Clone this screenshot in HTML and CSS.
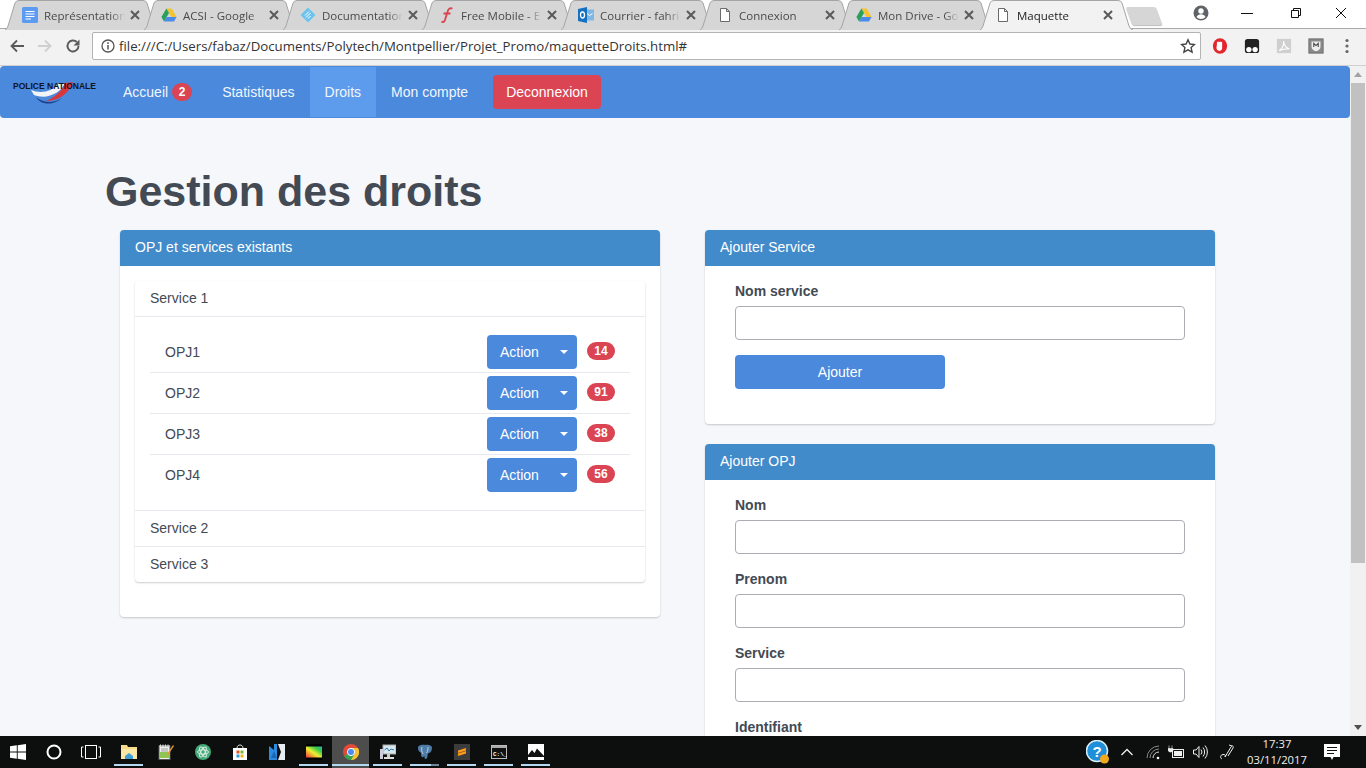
FILE: index.html
```html
<!DOCTYPE html>
<html lang="fr">
<head>
<meta charset="utf-8">
<title>Maquette</title>
<link rel="stylesheet" href="styles.css">
</head>
<body>
<svg class="sprite" aria-hidden="true">
  <symbol id="i-drive" viewBox="0 0 16 16">
    <path d="M5.400 1.500h5.200l5 8.600h-5.200z" fill="#f4c430"/>
    <path d="M5.400 1.500l2.600 4.400-5 8.600-2.600-4.400z" fill="#2aa05a"/>
    <path d="M3 14.500l2.600-4.400h10l-2.600 4.400z" fill="#4b8bea"/>
  </symbol>
  <symbol id="i-page" viewBox="0 0 16 16">
    <path d="M3.500 1.500h6l3 3v10h-9z M9.500 1.500v3h3" fill="#fff" stroke="#6b6b6b" stroke-width="1"/>
  </symbol>
  <symbol id="i-close" viewBox="0 0 12 12">
    <path d="M2 2l8 8M10 2l-8 8" stroke="#5a5a5a" stroke-width="2" fill="none"/>
  </symbol>
  <symbol id="i-tab" viewBox="0 0 153 30" preserveAspectRatio="none">
    <path d="M0 30 Q2 29 3 26 L10 3 Q11 .5 14 .5 H138 Q141 .5 142 3 L149 26 Q150 29 153 30"/>
  </symbol>
</svg>

<header class="tabstrip">
  <div class="tabs">
    <div class="tab">
      <svg class="tab-shape"><use href="#i-tab"/></svg>
      <svg class="tab-icon" viewBox="0 0 16 16"><rect x="0" y="0" width="16" height="16" rx="1.500" fill="#5c9bf2"/><path d="M3.500 4.500h9M3.500 7h9M3.500 9.500h9M3.500 12h5.500" stroke="#fff" stroke-width="1.100"/></svg>
      <span class="tab-text">Représentation</span>
      <svg class="tab-close"><use href="#i-close"/></svg>
    </div>
    <div class="tab">
      <svg class="tab-shape"><use href="#i-tab"/></svg>
      <svg class="tab-icon"><use href="#i-drive"/></svg>
      <span class="tab-text">ACSI - Google</span>
      <svg class="tab-close"><use href="#i-close"/></svg>
    </div>
    <div class="tab">
      <svg class="tab-shape"><use href="#i-tab"/></svg>
      <svg class="tab-icon" viewBox="0 0 16 16"><path d="M8 .5L15.500 8 8 15.500.5 8z" fill="#6cc4ee"/><path d="M5 8.500l4-4M6 10.500l4.500-4.500M8 11.500l2.500-2.500" stroke="#fff" stroke-width="1"/></svg>
      <span class="tab-text">Documentation</span>
      <svg class="tab-close"><use href="#i-close"/></svg>
    </div>
    <div class="tab">
      <svg class="tab-shape"><use href="#i-tab"/></svg>
      <svg class="tab-icon" viewBox="0 0 16 16"><path d="M13.500 1.500C10.500 .5 9 2.500 8.500 5L6 13c-.5 2-2 2.500-3.500 1.500M4.500 6.500h7" stroke="#d9434e" stroke-width="1.800" fill="none"/></svg>
      <span class="tab-text">Free Mobile - E</span>
      <svg class="tab-close"><use href="#i-close"/></svg>
    </div>
    <div class="tab">
      <svg class="tab-shape"><use href="#i-tab"/></svg>
      <svg class="tab-icon" viewBox="0 0 16 16"><rect x="6" y="2.500" width="10" height="11" fill="#7fb7e6"/><path d="M9 6.500l2.500 2 3-2" stroke="#fff" fill="none"/><path d="M0 2l9-2v16l-9-2z" fill="#1570bf"/><ellipse cx="4.500" cy="8" rx="2" ry="3" fill="none" stroke="#fff" stroke-width="1.300"/></svg>
      <span class="tab-text">Courrier - fahri</span>
      <svg class="tab-close"><use href="#i-close"/></svg>
    </div>
    <div class="tab">
      <svg class="tab-shape"><use href="#i-tab"/></svg>
      <svg class="tab-icon"><use href="#i-page"/></svg>
      <span class="tab-text">Connexion</span>
      <svg class="tab-close"><use href="#i-close"/></svg>
    </div>
    <div class="tab">
      <svg class="tab-shape"><use href="#i-tab"/></svg>
      <svg class="tab-icon"><use href="#i-drive"/></svg>
      <span class="tab-text">Mon Drive - Go</span>
      <svg class="tab-close"><use href="#i-close"/></svg>
    </div>
    <div class="tab tab-active">
      <svg class="tab-shape"><use href="#i-tab"/></svg>
      <svg class="tab-icon"><use href="#i-page"/></svg>
      <span class="tab-text">Maquette</span>
      <svg class="tab-close"><use href="#i-close"/></svg>
    </div>
  </div>
  <div class="newtab"></div>
  <div class="winctl">
    <svg class="win-profile" viewBox="0 0 16 16"><circle cx="8" cy="8" r="7.500" fill="#5f6368"/><circle cx="8" cy="6" r="2.700" fill="#fff"/><path d="M3.500 12c1-2 2.500-2.800 4.500-2.800s3.500.8 4.500 2.800c-1 1.300-2.700 2-4.500 2s-3.500-.7-4.500-2z" fill="#fff"/></svg>
    <svg class="win-btn win-min" viewBox="0 0 12 12"><path d="M0 6.500h12" stroke="#111" stroke-width="1"/></svg>
    <svg class="win-btn win-max" viewBox="0 0 12 12"><path d="M1.500 3.500h7v7h-7zM3.500 3.500v-2h7v7h-2" fill="none" stroke="#111"/></svg>
    <svg class="win-btn win-x" viewBox="0 0 12 12"><path d="M1 1l10 10M11 1L1 11" stroke="#111" fill="none"/></svg>
  </div>
</header>

<nav class="toolbar">
  <svg class="tool tool-back" viewBox="0 0 16 16"><path d="M15 8H2.500M8 2.500L2.500 8 8 13.500" stroke="#5a5a5a" stroke-width="1.800" fill="none"/></svg>
  <svg class="tool tool-fwd" viewBox="0 0 16 16"><path d="M1 8h12.500M8 2.500L13.500 8 8 13.500" stroke="#cfcfcf" stroke-width="1.800" fill="none"/></svg>
  <svg class="tool tool-reload" viewBox="0 0 16 16"><path d="M13.500 8A5.500 5.500 0 1 1 11.800 4" stroke="#5a5a5a" stroke-width="1.900" fill="none"/><path d="M14.500 1.500v6h-6z" fill="#5a5a5a"/></svg>
  <div class="omnibox">
    <svg class="omni-info" viewBox="0 0 14 14"><circle cx="7" cy="7" r="6" fill="none" stroke="#555" stroke-width="1.300"/><path d="M7 6v4.500M7 3.300v1.600" stroke="#555" stroke-width="1.500"/></svg>
    <span class="omni-url">file:///C:/Users/fabaz/Documents/Polytech/Montpellier/Projet_Promo/maquetteDroits.html#</span>
    <svg class="omni-star" viewBox="0 0 16 16"><path d="M8 1.800l1.900 4.200 4.600.5-3.400 3.100 1 4.500L8 11.800l-4.100 2.300 1-4.500L1.500 6.500 6.100 6z" fill="none" stroke="#444" stroke-width="1.400"/></svg>
  </div>
  <div class="exts">
    <svg class="ext" viewBox="0 0 18 18"><ellipse cx="9" cy="9" rx="8" ry="8.800" fill="#e3262e"/><path d="M5.500 8V5c0-1 1.200-1 1.300 0 0-1.500 1.500-1.500 1.600-.3 0-1.200 1.500-1.200 1.600 0 .1-.8 1.300-.8 1.400.2V11c0 2-1 3.500-3 3.500S5 13 5 11z" fill="#fff"/></svg>
    <svg class="ext" viewBox="0 0 18 18"><rect x="1" y="1" width="16" height="16" rx="3" fill="#222"/><circle cx="5.500" cy="13" r="3" fill="#fff"/><circle cx="12.500" cy="13" r="3" fill="#fff"/></svg>
    <svg class="ext" viewBox="0 0 18 18"><rect x="1" y="1" width="16" height="16" fill="#cfcfcf"/><path d="M3.500 14C7 12 9 8 8.500 3.500 9 8 11 11 15 12c-4 0-8 .5-11.500 2z" fill="none" stroke="#fff" stroke-width="1.200"/></svg>
    <svg class="ext" viewBox="0 0 18 18"><rect x="1" y="1" width="16" height="16" fill="#8a8a8a" stroke="#666"/><path d="M4 4h10v6c0 2.500-2.500 4-5 5-2.500-1-5-2.500-5-5z" fill="#eee"/><path d="M6.500 10V6l2.500 2.500L11.500 6v4" fill="none" stroke="#444" stroke-width="1.200"/></svg>
  </div>
  <svg class="tool-menu" viewBox="0 0 4 16"><circle cx="2" cy="2.500" r="1.600" fill="#666"/><circle cx="2" cy="8" r="1.600" fill="#666"/><circle cx="2" cy="13.500" r="1.600" fill="#666"/></svg>
</nav>

<div class="viewport">
  <main class="page">
    <div class="navbar">
      <svg class="logo" viewBox="0 0 85 26">
        <path d="M19 11C28 15 40 13 46 5L53 4C49 14 35 21 22 16z" fill="#f2f4f8"/>
        <path d="M34 22C46 22 57 15 61 3L53 4C50 12 43 18 34 22z" fill="#d8383c"/>
        <path d="M24 18C31 24 41 25 50 19 43 26 29 27 24 18z" fill="#1d3f8a"/>
        <text class="logo-text" x="1" y="9.500" textLength="83" lengthAdjust="spacingAndGlyphs">POLICE NATIONALE</text>
      </svg>
      <a class="nav-link">Accueil <span class="badge badge-nav">2</span></a>
      <a class="nav-link">Statistiques</a>
      <a class="nav-link nav-active">Droits</a>
      <a class="nav-link">Mon compte</a>
      <button class="btn btn-danger">Deconnexion</button>
    </div>

    <h1 class="title">Gestion des droits</h1>

    <div class="columns">
      <section class="panel">
        <h2 class="panel-head">OPJ et services existants</h2>
        <div class="panel-body panel-body-left">
          <div class="accordion">
            <div class="acc-head">Service 1</div>
            <ul class="opj-list">
              <li class="opj-row"><span class="opj-name">OPJ1</span><button class="btn btn-action">Action<span class="caret"></span></button><span class="badge">14</span></li>
              <li class="opj-row"><span class="opj-name">OPJ2</span><button class="btn btn-action">Action<span class="caret"></span></button><span class="badge">91</span></li>
              <li class="opj-row"><span class="opj-name">OPJ3</span><button class="btn btn-action">Action<span class="caret"></span></button><span class="badge">38</span></li>
              <li class="opj-row"><span class="opj-name">OPJ4</span><button class="btn btn-action">Action<span class="caret"></span></button><span class="badge">56</span></li>
            </ul>
            <div class="acc-head acc-top">Service 2</div>
            <div class="acc-head acc-top">Service 3</div>
          </div>
        </div>
      </section>

      <div class="stack">
        <section class="panel">
          <h2 class="panel-head">Ajouter Service</h2>
          <form class="panel-body form">
            <label class="field"><span class="field-label">Nom service</span><input class="input" type="text"></label>
            <button class="btn btn-primary" type="button">Ajouter</button>
          </form>
        </section>
        <section class="panel">
          <h2 class="panel-head">Ajouter OPJ</h2>
          <form class="panel-body form">
            <label class="field"><span class="field-label">Nom</span><input class="input" type="text"></label>
            <label class="field"><span class="field-label">Prenom</span><input class="input" type="text"></label>
            <label class="field"><span class="field-label">Service</span><input class="input" type="text"></label>
            <label class="field"><span class="field-label">Identifiant</span><input class="input" type="text"></label>
          </form>
        </section>
      </div>
    </div>
  </main>
  <aside class="scrollbar">
    <div class="sb-arrow"><span class="sb-up"></span></div>
    <div class="sb-track"><div class="sb-thumb"></div></div>
    <div class="sb-arrow"><span class="sb-down"></span></div>
  </aside>
</div>

<footer class="taskbar">
  <div class="tb tb-w36"><svg class="tb-icon" viewBox="0 0 16 16"><path d="M0 2.300l6.800-1v6.300H0zM7.700 1.200L16 0v7.600H7.700zM0 8.400h6.800v6.300l-6.800-1zM7.700 8.400H16V16l-8.300-1.200z" fill="#fff"/></svg></div>
  <div class="tb tb-w36"><svg class="tb-icon" viewBox="0 0 16 16"><circle cx="8" cy="8" r="6.500" fill="none" stroke="#fff" stroke-width="2"/></svg></div>
  <div class="tb tb-w38"><svg class="tb-icon tb-wide" viewBox="0 0 20 16"><rect x="4.500" y="1.500" width="11" height="13" fill="none" stroke="#fff"/><path d="M2.500 3H.5v10h2M17.500 3h2v10h-2" fill="none" stroke="#fff"/></svg></div>
  <div class="tb tb-on"><svg class="tb-icon" viewBox="0 0 16 16"><path d="M0 1h6l1 2h9v12H0z" fill="#f7dc8a"/><rect x="0" y="5" width="16" height="10" fill="#fbe7a6"/><path d="M4 15v-3l4-3 4 3v3z" fill="#3f9fd6"/></svg></div>
  <div class="tb"><svg class="tb-icon" viewBox="0 0 16 16"><rect x="1" y="2" width="11" height="13.500" fill="#f2f2f2" stroke="#555"/><rect x="2" y="8" width="9" height="6" fill="#8fc653"/><path d="M3 5h7M3 7h7" stroke="#999"/><path d="M1 2h11M2.500 .5v3M5 .5v3M7.500 .5v3M10 .5v3" stroke="#ddd"/><path d="M15 1l-6 9-1 2 2-1 6-9z" fill="#e89a2b"/></svg></div>
  <div class="tb"><svg class="tb-icon" viewBox="0 0 16 16"><circle cx="8" cy="8" r="8" fill="#45a878"/><ellipse cx="8" cy="8" rx="5.500" ry="2.200" fill="none" stroke="#d8f0e4" transform="rotate(60 8 8)"/><ellipse cx="8" cy="8" rx="5.500" ry="2.200" fill="none" stroke="#d8f0e4" transform="rotate(-60 8 8)"/><ellipse cx="8" cy="8" rx="5.500" ry="2.200" fill="none" stroke="#d8f0e4"/></svg></div>
  <div class="tb"><svg class="tb-icon" viewBox="0 0 16 16"><path d="M1 4h14v12H1z" fill="#fff"/><path d="M5 4c0-4 6-4 6 0" fill="none" stroke="#ddd"/><rect x="4.500" y="6.500" width="3" height="3" fill="#e8532a"/><rect x="8.500" y="6.500" width="3" height="3" fill="#7fba2c"/><rect x="4.500" y="10.500" width="3" height="3" fill="#2b9fe0"/><rect x="8.500" y="10.500" width="3" height="3" fill="#f7b318"/></svg></div>
  <div class="tb"><svg class="tb-icon" viewBox="0 0 16 16"><path d="M0 16V2l5 4V0h3v16z" fill="#2b8be0"/><path d="M9 0l7 0v16l-7 0 3-8z" fill="#e8edf2"/><path d="M2 14l3-7 3 7z" fill="#1c68b5"/></svg></div>
  <div class="tb tb-on"><svg class="tb-icon" viewBox="0 0 16 16"><defs><linearGradient id="g-film" x1="0" y1="1" x2="1" y2="0"><stop offset="0" stop-color="#e33"/><stop offset=".45" stop-color="#ee3"/><stop offset=".75" stop-color="#3c4"/><stop offset="1" stop-color="#3ac"/></linearGradient></defs><rect x="0" y="0" width="16" height="16" fill="#000"/><rect x="0" y="2.500" width="16" height="11" fill="url(#g-film)"/></svg></div>
  <div class="tb tb-on tb-active"><svg class="tb-icon" viewBox="0 0 16 16"><circle cx="8" cy="8" r="8" fill="#e04a3a"/><path d="M8 8L1.100 12A8 8 0 0 0 8 16c2 0 3.500-.5 5-2z" fill="#32a350"/><path d="M8 4h7a8 8 0 0 1-7 12l3.500-6z" fill="#f6c431"/><circle cx="8" cy="8" r="3.600" fill="#4c8bf0" stroke="#fff" stroke-width="1"/></svg></div>
  <div class="tb tb-on"><svg class="tb-icon" viewBox="0 0 16 16"><rect x="3" y="1" width="13" height="9" fill="#d8e6ee" stroke="#aaa"/><path d="M4.500 6l2.500-2 2 3 2-2 3 1" fill="none" stroke="#2a77b5"/><rect x="7" y="10" width="3" height="3" fill="#ccc"/><rect x="4" y="13" width="10" height="2" fill="#ddd"/><rect x="0" y="5" width="3" height="10" fill="#ccd"/></svg></div>
  <div class="tb tb-on tb-multi"><svg class="tb-icon" viewBox="0 0 16 16"><path d="M1 4c0-3 4-3.500 7-3 3-.5 7 0 7 3 0 3-2 5-3 5-1 0-1.500 1-1.500 3 0 2-1 3-2 3s-1-2-1-3c-1 1-2 2-3 .5C3.500 11 5 9 3.500 8.500 2 8 1 6 1 4z" fill="#4e7ea8"/><path d="M5 3c-1 3 0 5 1 7M11 3c0 2 0 4-1.500 6" stroke="#d9e6f0" fill="none" stroke-width=".8"/></svg></div>
  <div class="tb tb-on"><svg class="tb-icon" viewBox="0 0 16 16"><rect width="16" height="16" fill="#3c3c3c"/><path d="M4 6.500l8-2.500v2.500L4 9zM12 9.500L4 12v-2.500l8-2.500z" fill="#ff9b15"/></svg></div>
  <div class="tb tb-on"><svg class="tb-icon" viewBox="0 0 16 16"><rect x=".5" y="1.500" width="15" height="13" fill="#111" stroke="#bbb"/><rect x="1" y="2" width="14" height="2" fill="#aaa"/><text class="cmd-text" x="2" y="11.500">C:\_</text></svg></div>
  <div class="tb tb-on"><svg class="tb-icon" viewBox="0 0 16 16"><rect width="16" height="16" fill="#fff"/><path d="M0 11l4-5 2.500 3L9 4.500 16 12v1H0z" fill="#111"/></svg></div>

  <div class="tray">
    <div class="tr tr-help"><svg class="tr-icon-lg" viewBox="0 0 24 24"><circle cx="11" cy="11" r="10.500" fill="#1e8fd8" stroke="#d8eef9" stroke-width="1.500"/><text class="help-text" x="11" y="17" text-anchor="middle">?</text><circle cx="18.500" cy="19" r="4.500" fill="#f2a81d"/></svg></div>
    <div class="tr tr-caret"><svg class="tr-icon" viewBox="0 0 16 16"><path d="M2.500 11L8 5.500l5.500 5.500" fill="none" stroke="#eee" stroke-width="1.300"/></svg></div>
    <div class="tr tr-wifi"><svg class="tr-icon" viewBox="0 0 16 16"><path d="M2 14a12 12 0 0 1 12-12M5 14a9 9 0 0 1 9-9" fill="none" stroke="#888"/><path d="M8 14a6 6 0 0 1 6-6" fill="none" stroke="#ddd"/><circle cx="13" cy="14" r="1.300" fill="#fff"/></svg></div>
    <div class="tr tr-batt"><svg class="tr-icon" viewBox="0 0 16 16"><rect x="4.500" y="5.500" width="11" height="8" fill="none" stroke="#eee"/><rect x="6" y="7" width="8" height="5" fill="#eee"/><path d="M1 1.500v3M4 1.500v3M0 4.500h5v2l-1.500 1.500h-2L0 6.500z" fill="#eee" stroke="#eee" stroke-width=".6"/></svg></div>
    <div class="tr tr-sound"><svg class="tr-icon" viewBox="0 0 16 16"><path d="M1.500 6h2.500l3-3.500v11L4 10H1.500z" fill="none" stroke="#eee"/><path d="M9 5.500a4 4 0 0 1 0 5M11 3.500a7 7 0 0 1 0 9M13 1.500a10 10 0 0 1 0 13" fill="none" stroke="#eee"/></svg></div>
    <div class="tr tr-pen"><svg class="tr-icon" viewBox="0 0 16 16"><path d="M3 15c-2-1-2-4 1-4.500 2-.5 3 1 2 2.500L12 3c1-2 3-1 2 1l-5 8M10 1l3 1" fill="none" stroke="#eee"/></svg></div>
    <div class="tr tr-clock"><span>17:37</span><span>03/11/2017</span></div>
    <div class="tr tr-notif"><svg class="tr-icon" viewBox="0 0 16 16"><path d="M0 0h16v13H9.500L8 16l-1.500-3H0z" fill="#fff"/><path d="M3 3.500h10M3 6.500h10M3 9.500h7" stroke="#111"/></svg></div>
    <div class="tr-end"></div>
  </div>
</footer>
</body>
</html>
```
FILE: styles.css
```css
* { box-sizing: border-box; }
html, body { margin: 0; padding: 0; }
body {
  width: 1366px;
  height: 768px;
  overflow: hidden;
  font-family: "Liberation Sans", Arial, sans-serif;
  font-size: 14px;
  color: #434a54;
  background: #f5f7fa;
}
.sprite { display: none; }

/* Browser tab strip */
.tabstrip {
  display: flex;
  height: 29px;
  padding-left: 5px;
  background: #fff;
  border-bottom: 1px solid #a9a9a9;
}
.tabs { display: flex; }
.tab {
  position: relative;
  display: flex;
  align-items: center;
  width: 139px;
  height: 29px;
  padding: 1px 3px 0 17px;
  font-family: "Open Sans", sans-serif;
  font-size: 11.5px;
  color: #4a4a4a;
}
.tab-shape {
  position: absolute;
  left: 0;
  top: 0;
  width: 153px;
  height: 30px;
  fill: #d6d6d6;
  stroke: #a5a5a5;
  stroke-width: 1;
}
.tab-active .tab-shape { left: 2px; fill: #f2f2f2; }
.tab-active { color: #222; }
.tab-icon { position: relative; flex: none; width: 16px; height: 16px; }
.tab-text {
  position: relative;
  flex: 1;
  min-width: 0;
  margin-left: 6px;
  white-space: nowrap;
  overflow: hidden;
  -webkit-mask-image: linear-gradient(to right, #000 82%, transparent 100%);
  mask-image: linear-gradient(to right, #000 82%, transparent 100%);
}
.tab-close { position: relative; flex: none; width: 12px; height: 12px; margin-left: 4px; }
.newtab {
  width: 30px;
  height: 18px;
  margin: 7px 0 0 12px;
  background: #d6d6d6;
  transform: skewX(20deg);
  border-radius: 2px;
  box-shadow: 0 1px 1px #bbb;
}
.winctl { display: flex; align-items: flex-start; margin-left: auto; height: 28px; }
.win-profile { width: 16px; height: 16px; margin: 5px 32px 0 0; }
.win-btn { width: 12px; height: 12px; margin-top: 7px; }
.win-min { margin-right: 37px; }
.win-max { margin-right: 33px; }
.win-x { margin-right: 19px; }

/* Browser toolbar */
.toolbar {
  display: flex;
  align-items: center;
  height: 37px;
  padding: 0 0 2px 9px;
  background: #f2f2f2;
  border-bottom: 1px solid #d0d0d0;
}
.tool { width: 16px; height: 16px; flex: none; }
.tool-fwd { margin-left: 12px; }
.tool-reload { margin: 0 11px 0 12px; }
.omnibox {
  display: flex;
  align-items: center;
  width: 1109px;
  height: 28px;
  padding: 0 4px 0 8px;
  background: #fff;
  border: 1px solid #b4b4b4;
  border-radius: 2px;
}
.omni-info { width: 14px; height: 14px; flex: none; }
.omni-url {
  flex: 1;
  margin-left: 4px;
  font-family: "Open Sans", sans-serif;
  font-size: 13.25px;
  color: #333;
  white-space: nowrap;
}
.omni-star { width: 16px; height: 16px; flex: none; }
.exts { display: flex; gap: 16px; margin-left: 11px; }
.ext { width: 16px; height: 16px; }
.tool-menu { width: 4px; height: 16px; margin-left: 21px; }

/* Page */
.viewport { display: flex; height: 670px; overflow: hidden; }
.page { width: 1350px; height: 670px; overflow: hidden; background: #f5f7fa; }
.navbar {
  display: flex;
  align-items: center;
  height: 52px;
  padding-left: 12px;
  background: #4a89dc;
  border-radius: 4px;
}
.logo { width: 85px; height: 26px; flex: none; margin-right: 11px; }
.logo-text { font: bold 8.500px "Liberation Sans", sans-serif; fill: #10141e; }
.nav-link {
  display: flex;
  align-items: center;
  height: 50px;
  padding: 0 15px;
  color: #f2f6fc;
  font-size: 14px;
}
.nav-active { background: #5d9cec; }
.badge {
  display: inline-block;
  min-width: 28px;
  height: 18px;
  padding: 3px 7px;
  background: #da4453;
  color: #fff;
  font-size: 12px;
  font-weight: bold;
  line-height: 12px;
  text-align: center;
  border-radius: 10px;
}
.badge-nav { min-width: 20px; margin-left: 4px; padding: 3px 6px; }
.btn {
  height: 34px;
  padding: 0 13px;
  border: 0;
  border-radius: 4px;
  color: #fff;
  font-family: inherit;
  font-size: 14px;
}
.btn-danger { margin-left: 10px; background: #da4453; }
.btn-primary { display: block; width: 210px; background: #4a89dc; }
.title {
  margin: 50px 0 16px;
  padding-left: 105px;
  font-size: 43px;
  font-weight: bold;
  line-height: 46px;
  color: #434a54;
}
.columns {
  display: grid;
  grid-template-columns: 540px 510px;
  column-gap: 45px;
  align-items: start;
  padding-left: 120px;
}
.stack { display: flex; flex-direction: column; gap: 20px; }
.panel {
  background: #fff;
  border-radius: 4px;
  box-shadow: 0 1px 2px rgba(0, 0, 0, .2);
  overflow: hidden;
}
.panel-head {
  height: 36px;
  margin: 0;
  padding: 0 15px;
  background: #428bca;
  color: #fff;
  font-size: 14px;
  font-weight: normal;
  line-height: 34px;
}
.panel-body { padding: 15px; }
.panel-body-left { padding-bottom: 35px; }
.accordion {
  background: #fff;
  border-radius: 4px;
  box-shadow: 0 1px 2px rgba(0, 0, 0, .2);
}
.acc-head { height: 35px; padding: 0 15px; line-height: 34px; }
.acc-top { height: 36px; border-top: 1px solid #e6e9ed; line-height: 35px; }
.opj-list {
  margin: 0;
  padding: 15px;
  list-style: none;
  border-top: 1px solid #e6e9ed;
}
.opj-row {
  display: flex;
  align-items: center;
  height: 41px;
  padding: 0 15px;
  border-bottom: 1px solid #e6e9ed;
}
.opj-row:last-child { height: 40px; border-bottom: 0; }
.opj-name { flex: 1; }
.btn-action {
  display: flex;
  align-items: center;
  width: 90px;
  background: #4a89dc;
}
.caret {
  margin-left: 21px;
  border-top: 4px solid #fff;
  border-left: 4px solid transparent;
  border-right: 4px solid transparent;
}
.opj-row .badge { margin: -2px 0 0 10px; }
.form { padding: 15px 30px 35px; }
.field { display: block; margin-bottom: 15px; }
.field-label { display: block; margin-bottom: 5px; font-weight: bold; line-height: 20px; }
.input {
  display: block;
  width: 100%;
  height: 34px;
  background: #fff;
  border: 1px solid #aaadb2;
  border-radius: 4px;
}

/* Scrollbar */
.scrollbar { display: flex; flex-direction: column; width: 16px; background: #f1f1f1; }
.sb-arrow { display: flex; align-items: center; justify-content: center; height: 17px; }
.sb-up { border-bottom: 5px solid #a3a3a3; border-left: 4px solid transparent; border-right: 4px solid transparent; }
.sb-down { border-top: 5px solid #505050; border-left: 4px solid transparent; border-right: 4px solid transparent; }
.sb-track { flex: 1; padding: 0 1px; }
.sb-thumb { height: 480px; background: #c1c1c1; }

/* Windows taskbar */
.taskbar {
  display: flex;
  height: 32px;
  background: #0d0f0f;
  color: #eee;
}
.tb {
  position: relative;
  display: flex;
  align-items: center;
  justify-content: center;
  flex: none;
  width: 37px;
  height: 32px;
}
.tb-w36 { width: 36px; }
.tb-w38 { width: 38px; }
.tb-icon { width: 16px; height: 16px; }
.tb-wide { width: 20px; }
.tb-on::after {
  content: "";
  position: absolute;
  left: 4px;
  right: 4px;
  bottom: 2px;
  height: 2px;
  background: #b4d8f2;
}
.tb-multi::after { background: linear-gradient(to right, #b4d8f2 73%, #6f8798 73%); }
.tb-active { background: #4d4d4d; }
.tb-active::after { left: 0; right: 0; }
.cmd-text { font: bold 6px "Liberation Mono", monospace; fill: #fff; }
.tray { display: flex; margin-left: auto; }
.tr { display: flex; align-items: center; justify-content: center; height: 32px; flex: none; }
.tr-icon { width: 16px; height: 16px; }
.tr-icon-lg { width: 24px; height: 24px; }
.tr-help { width: 28px; }
.tr-caret { width: 29px; }
.tr-wifi, .tr-batt { width: 23px; }
.tr-sound { width: 25px; }
.tr-pen { width: 30px; }
.tr-clock {
  flex-direction: column;
  width: 70px;
  font-family: "Open Sans", sans-serif;
  font-size: 11.3px;
  line-height: 16px;
  color: #eee;
}
.tr-notif { width: 40px; }
.tr-end { width: 14px; }
.help-text { font: bold 15px "Liberation Sans", sans-serif; fill: #fff; }
```
